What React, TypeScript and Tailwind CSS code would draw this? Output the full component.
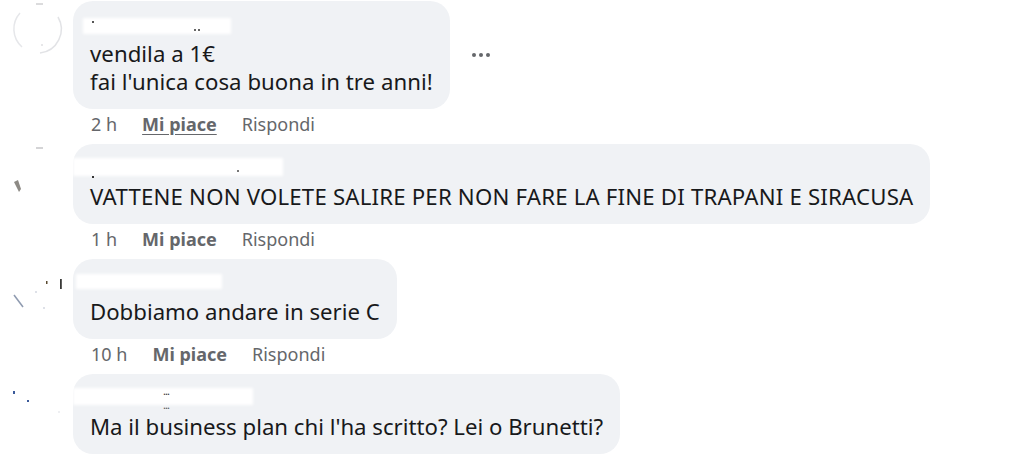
import React from "react";

type C = {
  lines: string[];
  time: string;
  underline?: boolean;
  dots?: boolean;
  patch: string;
  avatar: React.ReactNode;
  marks?: React.ReactNode;
  hideActions?: boolean;
  track?: string;
};

const font = { fontFamily: '"Noto Sans", "Open Sans", Arial, sans-serif' };

function Avatar1() {
  return (
    <svg width="73" height="60" viewBox="0 0 73 60" className="block">
      <path d="M 20 12 A 24 24 0 0 0 22 46" fill="none" stroke="#e6e7ea" strokeWidth="1.5" />
      <path d="M 58 16 A 24 24 0 0 1 40 52" fill="none" stroke="#e2e3e6" strokeWidth="1.5" />
      <line x1="36" y1="3" x2="43" y2="3" stroke="#b8b8bb" strokeWidth="1" />
      <circle cx="42" cy="44" r="0.8" fill="#c8c8cc" />
    </svg>
  );
}
function Avatar2() {
  return (
    <svg width="73" height="60" viewBox="0 0 73 60" className="block">
      <line x1="36" y1="4" x2="43" y2="4" stroke="#a9a9ad" strokeWidth="1" />
      <path d="M 14 38 L 18 36 L 21 45 L 19 48 Z" fill="#8d8a85" />
    </svg>
  );
}
function Avatar3() {
  return (
    <svg width="73" height="60" viewBox="0 0 73 60" className="block">
      <rect x="46" y="22" width="1.5" height="3" fill="#5a4a30" />
      <rect x="60" y="20" width="1.8" height="10" fill="#3a3a38" />
      <line x1="14" y1="36" x2="23" y2="48" stroke="#8f9bb0" strokeWidth="1.5" />
      <circle cx="36" cy="33" r="0.8" fill="#b5bccb" />
      <circle cx="44" cy="49" r="0.8" fill="#b5bccb" />
    </svg>
  );
}
function Avatar4() {
  return (
    <svg width="73" height="60" viewBox="0 0 73 60" className="block">
      <rect x="13" y="17" width="2" height="3" fill="#3b5a9a" />
      <rect x="27" y="26" width="2" height="2" fill="#3b5a9a" />
      <circle cx="59" cy="38" r="0.7" fill="#d0d3da" />
    </svg>
  );
}

const comments: C[] = [
  {
    lines: ["vendila a 1€", "fai l'unica cosa buona in tre anni!"],
    time: "2 h",
    underline: true,
    dots: true,
    track: "tracking-[0.05px]",
    patch: "left-[10px] top-[17px] w-[148px] h-[16px]",
    avatar: <Avatar1 />,
    marks: (
      <>
        <span className="absolute left-[19px] top-[20px] w-[2px] h-[2px] bg-[#555]" />
        <span className="absolute left-[121px] top-[28px] w-[2px] h-[1.5px] bg-[#666]" />
        <span className="absolute left-[125px] top-[28px] w-[2px] h-[1.5px] bg-[#666]" />
      </>
    ),
  },
  {
    lines: ["VATTENE NON VOLETE SALIRE PER NON FARE LA FINE DI TRAPANI E SIRACUSA"],
    time: "1 h",
    track: "tracking-[0.2px]",
    patch: "left-[0px] top-[14px] w-[210px] h-[18px]",
    avatar: <Avatar2 />,
    marks: (
      <>
        <span className="absolute left-[19px] top-[32px] w-[2px] h-[2px] bg-[#333]" />
        <span className="absolute left-[164px] top-[26px] w-[2px] h-[1.5px] bg-[#777]" />
      </>
    ),
  },
  {
    lines: ["Dobbiamo andare in serie C"],
    time: "10 h",
    patch: "left-[3px] top-[15px] w-[146px] h-[15px]",
    avatar: <Avatar3 />,
  },
  {
    lines: ["Ma il business plan chi l'ha scritto? Lei o Brunetti?"],
    time: "",
    hideActions: true,
    patch: "left-[0px] top-[14px] w-[180px] h-[17px]",
    avatar: <Avatar4 />,
    marks: (
      <>
        <span className="absolute left-[90px] top-[11px] text-[11px] leading-none text-[#333] tracking-[-1px]">...</span>
        <span className="absolute left-[90px] top-[25px] text-[11px] leading-none text-[#555] tracking-[-1px]">...</span>
      </>
    ),
  },
];

export default function App() {
  return (
    <div className="w-[1024px] h-[454px] overflow-hidden bg-white pt-[1px]" style={font}>
      <div className="flex flex-col">
        {comments.map((c, i) => (
          <div key={i} className="flex flex-row items-start">
            <div className="w-[73px] shrink-0">{c.avatar}</div>
            <div className="flex flex-col items-start">
              <div className="flex flex-row items-center">
                <div className="relative rounded-[20px] bg-[#f0f2f5] px-[17px] pt-[39px] pb-[13px]">
                  <div className={`absolute bg-white blur-[1.5px] ${c.patch}`} />
                  {c.marks}
                  {c.lines.map((l, j) => (
                    <div key={j} className={`text-[22.2px] leading-[28px] text-[#18191b] whitespace-nowrap ${c.track ?? ""}`}>
                      {l}
                    </div>
                  ))}
                </div>
                {c.dots && (
                  <div className="ml-[22px] flex flex-row gap-[3px] items-center">
                    <span className="w-[4px] h-[4px] rounded-full bg-[#65676b]" />
                    <span className="w-[4px] h-[4px] rounded-full bg-[#65676b]" />
                    <span className="w-[4px] h-[4px] rounded-full bg-[#65676b]" />
                  </div>
                )}
              </div>
              {!c.hideActions && (
                <div className="mt-[5px] mb-[10px] h-[20px] pl-[18px] flex flex-row items-center gap-[25px] text-[18px] leading-[20px] text-[#65676b]">
                  <span>{c.time}</span>
                  <span className={`font-bold ${c.underline ? "underline underline-offset-[3px]" : ""}`}>Mi piace</span>
                  <span>Rispondi</span>
                </div>
              )}
            </div>
          </div>
        ))}
      </div>
    </div>
  );
}
